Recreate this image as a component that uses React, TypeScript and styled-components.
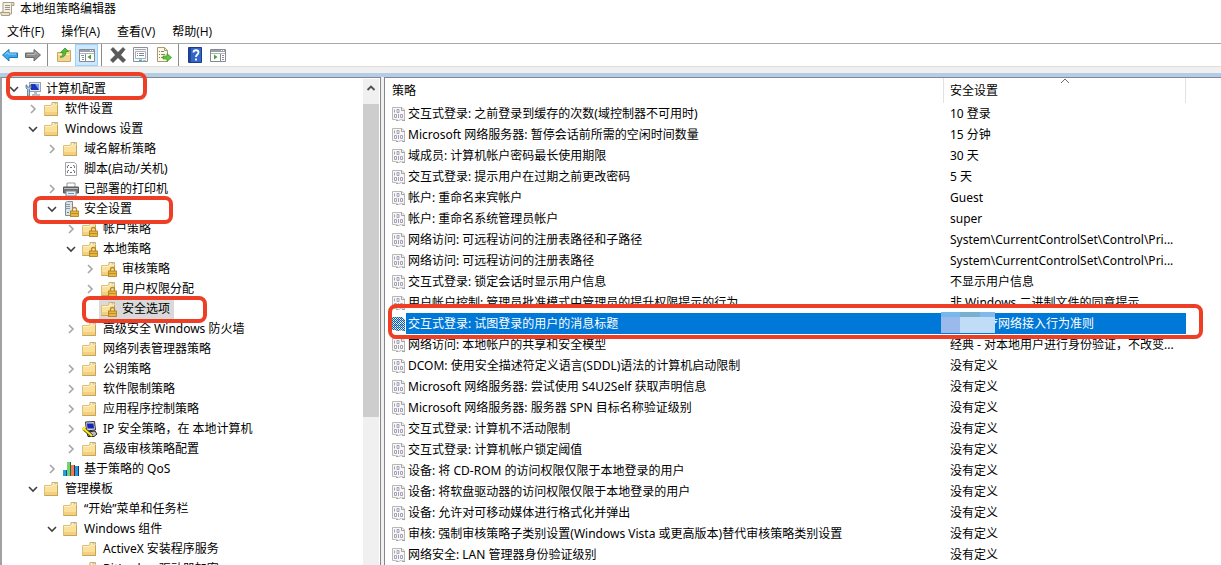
import React from 'react';
import styled, { createGlobalStyle, css } from 'styled-components';

const GlobalStyle = createGlobalStyle`
  *, *::before, *::after { box-sizing: border-box; }
  body {
    margin: 0;
    background: #fff;
    color: #000;
    font: 12px/20px "Noto Sans", "Noto Sans CJK SC", sans-serif;
  }
  button { font: inherit; color: inherit; border: 0; padding: 0; background: none; }
  svg { display: block; flex: none; }
`;

const Window = styled.div`
  display: flex;
  flex-direction: column;
  height: 100vh;
  overflow: hidden;
`;

const TitleBar = styled.header`
  display: flex;
  align-items: center;
  gap: 4px;
  height: 18px;
`;

const Title = styled.h1`
  margin: 0;
  font-size: 12px;
  font-weight: 400;
  line-height: 18px;
`;

const MenuBar = styled.nav`
  display: flex;
  align-items: center;
  gap: 17px;
  height: 26px;
  padding: 2px 7px 0;
  border-bottom: 1px solid #a8a8a8;
  font-family: "Open Sans", "Noto Sans CJK SC", sans-serif;
`;

const MenuItem = styled.button`
  white-space: nowrap;
`;

const ToolBar = styled.div`
  display: flex;
  align-items: center;
  height: 23px;
  margin-left: -2px;
  border-bottom: 1px solid #dcdcdc;
`;

const ToolButton = styled.button<{ $on?: boolean }>`
  display: flex;
  align-items: center;
  justify-content: center;
  width: 23px;
  height: 22px;
  border: 1px solid ${p => (p.$on ? '#99d1ff' : 'transparent')};
  background: ${p => (p.$on ? '#cce8ff' : 'transparent')};
`;

const ToolGroup = styled.div`
  display: flex;
  & + & {
    margin-left: 3px;
    padding-left: 4px;
    border-left: 1px solid #8d8d8d;
  }
`;

const Workspace = styled.main`
  position: relative;
  display: flex;
  flex: 1;
  min-height: 0;
  padding-top: 10px;
  background: linear-gradient(#f0f0f0 6px, #b4cde6 6px, #b4cde6 10px, #f0f0f0 10px);
`;

const TreePane = styled.section`
  display: flex;
  flex: none;
  width: 381px;
  border: solid #828790;
  border-width: 1px 1px 0 2px;
  border-left-color: #a0a2a6;
  background: #fff;
  overflow: hidden;
`;

const Tree = styled.ul`
  flex: 1;
  min-width: 0;
  margin: 0;
  padding: 1px 0 0;
  list-style: none;
`;

const TreeRow = styled.li<{ $depth: number }>`
  display: flex;
  align-items: center;
  gap: 3px;
  height: 20px;
  padding-left: ${p => 6 + p.$depth * 19}px;
  white-space: nowrap;
`;

const Expander = styled.button`
  width: 12px;
  height: 12px;
`;

const TreeNode = styled.span<{ $selected?: boolean }>`
  display: flex;
  align-items: center;
  gap: 5px;
  height: 20px;
  padding: 0 4px 0 2px;
  background: ${p => (p.$selected ? '#d9d9d9' : 'transparent')};
`;

const ScrollBar = styled.div`
  display: flex;
  flex-direction: column;
  width: 16px;
  margin: 1px 1px 0 0;
  background: #f0f0f0;
`;

const ScrollUp = styled.button`
  display: flex;
  justify-content: center;
  height: 25px;
  padding-top: 4px;
`;

const ScrollThumb = styled.div`
  height: 313px;
  background: #cdcdcd;
`;

const ListPane = styled.section`
  position: relative;
  flex: 1;
  min-width: 0;
  margin-left: 3px;
  padding-right: 35px;
  border: solid #828790;
  border-width: 1px 0 0 1px;
  background: #fff;
`;

const Table = styled.table`
  width: 100%;
  table-layout: fixed;
  border-collapse: collapse;
`;

const SettingCol = styled.col`
  width: 243px;
`;

const HeadCell = styled.th<{ $divided?: boolean }>`
  position: relative;
  height: 25px;
  padding: 0 7px;
  font-weight: 400;
  text-align: left;
  ${p => p.$divided && css`
    background: linear-gradient(#e2e2e2, #e2e2e2) left / 1px 100% no-repeat,
      linear-gradient(#e2e2e2, #e2e2e2) right / 1px 100% no-repeat;
  `}
`;

const SortMark = styled.svg`
  position: absolute;
  top: 0;
  left: 50%;
  transform: translateX(-50%);
`;

const Cell = styled.td<{ $selected?: boolean }>`
  position: relative;
  height: 21px;
  padding: 0 0 0 7px;
  white-space: nowrap;
  ${p => p.$selected && css`background: #0078d7; color: #fff;`}
`;

const NameCell = styled.td`
  height: 21px;
  padding: 0 0 0 7px;
  white-space: nowrap;
`;

const PolicyName = styled.div`
  display: flex;
  align-items: center;
`;

const PolicyLabel = styled.span<{ $selected?: boolean }>`
  flex: 1;
  padding-left: 2px;
  line-height: 21px;
  ${p => p.$selected && css`background: #0078d7; color: #fff;`}
`;

const Redacted = styled.span`
  position: absolute;
  top: -1px;
  left: -2px;
  width: 54px;
  height: 21px;
  background:
    linear-gradient(90deg, #78b8ee 19px, #79b0d0 19px, #79b0d0 39px, #80b9ec 39px) top / 100% 5px no-repeat,
    linear-gradient(90deg, #9bb9ea 19px, #c0dcf7 19px);
`;

const AfterRedacted = styled.span`
  padding-left: 36px;
`;

const Callout = styled.div<{ $top: number; $left: number; $width?: number; $right?: number; $height: number }>`
  position: absolute;
  top: ${p => p.$top}px;
  left: ${p => p.$left}px;
  ${p => (p.$width ? `width: ${p.$width}px;` : `right: ${p.$right}px;`)}
  height: ${p => p.$height}px;
  border: 4px solid #ee3f26;
  border-radius: 8px;
  pointer-events: none;
`;

type IconName = 'computer' | 'folder' | 'locked' | 'script' | 'printer' | 'server' | 'ipsec' | 'chart';

const Padlock = () => (
  <g>
    <path d="M9.500 10V8.500a2 2 0 0 1 4 0V10" fill="none" stroke="#b48a2c" strokeWidth="1.300" />
    <rect x="7.500" y="10" width="8" height="5.500" fill="#e8b63d" stroke="#a9791d" strokeWidth=".8" />
    <path d="M8 12.500h7" stroke="#c18d27" />
  </g>
);

const Folder = () => (
  <g>
    <path d="M.5 14.500V4.500h6.500l1.500-2h5v12z" fill="#fbe09a" stroke="#dcc07a" />
    <path d="M8 3.500V1.500h5.500v2" fill="#fdf3d3" stroke="#cfae62" />
    <path d="M10.500 3h2" stroke="#5f9fd0" />
    <path d="M1 5.500h6.500l1.500-1.500h4.500" fill="none" stroke="#fff3c9" />
    <path d="M1 11h12v3H1z" fill="#f3d07e" />
    <path d="M.5 14.500h13.500M13.500 4v10.500" stroke="#c8a55a" />
  </g>
);

function TreeIcon({ name }: { name: IconName }) {
  return (
    <svg width="16" height="16" viewBox="0 0 16 16" aria-hidden="true">
      {name === 'folder' && <Folder />}
      {name === 'locked' && <><Folder /><Padlock /></>}
      {name === 'computer' && (
        <g>
          <rect x="4.500" y="1.500" width="11" height="9" fill="#e5eaf0" stroke="#9aa3ad" />
          <rect x="6" y="3" width="8" height="6" fill="#1734c4" />
          <path d="M10 3h4v6z" fill="#6f9df0" />
          <path d="M9 11h3v2h3v2H7v-2h2z" fill="#b8bec5" />
          <path d="M1 4v3l1.500 1.500V15h2V8.500L6 7V4H5v2H2V4z" fill="#b9ccd9" stroke="#4d7289" strokeWidth=".8" />
        </g>
      )}
      {name === 'script' && (
        <g>
          <path d="M2.500 1.500h9l2 2v11h-11z" fill="#fff" stroke="#a5a5a5" />
          <path d="M6 4.500H5l-1 1.500 1 1M7 6.500h2M10 4.500h1l1 1.500-1 1M6 9.500H5l-1 1.500 1 1M7 11.500h2M10 9.500h1l1 1.500-1 1" fill="none" stroke="#6a737c" />
        </g>
      )}
      {name === 'printer' && (
        <g>
          <path d="M4 6V2h8v4" fill="#fff" stroke="#999" />
          <path d="M.5 6h15v6H.5z" fill="#6c7075" stroke="#55595e" />
          <path d="M1 7.500h14" stroke="#b9bdc2" />
          <path d="M3 10h10v5H3z" fill="#e5eef5" stroke="#888" />
          <path d="M5 12.500h6" stroke="#4f9dca" />
        </g>
      )}
      {name === 'server' && (
        <g>
          <path d="M2.500 1.500l2-1h5v13l-2 1h-5z" fill="#dce2e7" stroke="#7f8a93" />
          <path d="M3 3.500h4M3 5.500h4M3 7.500h4" stroke="#8b98a2" />
          <path d="M4 11.500h2" stroke="#4aa858" />
          <Padlock />
        </g>
      )}
      {name === 'ipsec' && (
        <g>
          <path d="M3.500 1l9-.5 1 8.500-9 1z" fill="#d4d4d4" stroke="#333" />
          <path d="M5 2.500h6.500l.5 5H5.500z" fill="#1522bf" />
          <path d="M5 11l8-1 2 3-3 2.500H6z" fill="#bdbdbd" stroke="#222" />
          <path d="M1 7L10 15" stroke="#333" strokeWidth="3.400" />
          <path d="M1 7L10 15M.5 9l3-3" stroke="#ffec19" strokeWidth="2" />
        </g>
      )}
      {name === 'chart' && (
        <g>
          <path d="M0 9h4v6H0z" fill="#0b4f8c" /><path d="M0 9h3v6H0z" fill="#2b9be6" />
          <path d="M4 1h4v14H4z" fill="#1e6b3a" /><path d="M4 1h3v14H4z" fill="#6fd66f" />
          <path d="M8 4h4v11H8z" fill="#5a2416" /><path d="M8 4h3v11H8z" fill="#f4795a" />
          <path d="M12 5h4v10h-4z" fill="#0b3d6e" /><path d="M12 5h3v10h-3z" fill="#259ae0" />
        </g>
      )}
    </svg>
  );
}

const Chevron = ({ open }: { open: boolean }) => (
  <svg width="12" height="12" viewBox="0 0 12 12" aria-hidden="true">
    {open
      ? <path d="M2 4l4 4 4-4" fill="none" stroke="#404040" strokeWidth="1.600" />
      : <path d="M4 2l4 4-4 4" fill="none" stroke="#a6a6a6" strokeWidth="1.600" />}
  </svg>
);

const PAGE = 'M.5 1.500h9.500l2.500 2.500v10.500l-3-1-3 1-3-1H.5z';

const PolicyIcon = ({ selected }: { selected?: boolean }) => (
  <svg width="14" height="16" viewBox="0 0 14 16" aria-hidden="true">
    <defs>
      <pattern id="dither" width="2" height="2" patternUnits="userSpaceOnUse">
        <path d="M0 0h1v1H0zM1 1h1v1H1z" fill="#0064b4" />
      </pattern>
    </defs>
    <path d={PAGE} fill="#f7f7f7" stroke="#b8b8b8" />
    <path d="M9.500 1.500v3h3M4 14.500h2M10 14.500h3" fill="none" stroke="#a3a3a3" />
    <path d="M2.500 3.500v3M5 3.500h2v3H5zM2.500 8.500h2v3h-2zM6.500 8v4M8.500 8.500h2v3h-2z" fill="none" stroke="#a5a1b4" />
    {selected && <path d={PAGE} fill="url(#dither)" stroke="url(#dither)" />}
  </svg>
);

const ToolIcon = ({ children }: { children: React.ReactNode }) => (
  <svg width="16" height="16" viewBox="0 0 16 16" aria-hidden="true">{children}</svg>
);

const PaneGlyph = ({ right }: { right?: boolean }) => (
  <ToolIcon>
    <path d="M.5 2.500h15v12H.5z" fill="#fff" stroke="#858b91" />
    <path d="M1 3h14v2H1z" fill="#9aa1a8" />
    <path d="M11 3.500h1M13 3.500h1" stroke="#fff" />
    <path d="M1 6.500h14" stroke="#b0b5ba" />
    {right ? (
      <g>
        <path d="M10.500 7v7" stroke="#858b91" />
        <path d="M4 7.500v5l3.500-2.500z" fill="#43a337" />
        <path d="M12 8.500h2M12 10.500h2M12 12.500h2" stroke="#8a9299" />
      </g>
    ) : (
      <g>
        <path d="M6.500 7v7" stroke="#858b91" />
        <path d="M2 8.500h3M3 10.500h2M3 12.500h2" stroke="#8a9299" />
        <path d="M12 7.500v5L8.500 10z" fill="#43a337" />
      </g>
    )}
  </ToolIcon>
);

interface Item { depth: number; icon: IconName; label: string; open?: boolean; selected?: boolean }

const tree: Item[] = [
  { depth: 0, icon: 'computer', label: '计算机配置', open: true },
  { depth: 1, icon: 'folder', label: '软件设置', open: false },
  { depth: 1, icon: 'folder', label: 'Windows 设置', open: true },
  { depth: 2, icon: 'folder', label: '域名解析策略', open: false },
  { depth: 2, icon: 'script', label: '脚本(启动/关机)' },
  { depth: 2, icon: 'printer', label: '已部署的打印机', open: false },
  { depth: 2, icon: 'server', label: '安全设置', open: true },
  { depth: 3, icon: 'locked', label: '帐户策略', open: false },
  { depth: 3, icon: 'locked', label: '本地策略', open: true },
  { depth: 4, icon: 'locked', label: '审核策略', open: false },
  { depth: 4, icon: 'locked', label: '用户权限分配', open: false },
  { depth: 4, icon: 'locked', label: '安全选项', selected: true },
  { depth: 3, icon: 'folder', label: '高级安全 Windows 防火墙', open: false },
  { depth: 3, icon: 'folder', label: '网络列表管理器策略' },
  { depth: 3, icon: 'folder', label: '公钥策略', open: false },
  { depth: 3, icon: 'folder', label: '软件限制策略', open: false },
  { depth: 3, icon: 'folder', label: '应用程序控制策略', open: false },
  { depth: 3, icon: 'ipsec', label: 'IP 安全策略，在 本地计算机', open: false },
  { depth: 3, icon: 'folder', label: '高级审核策略配置', open: false },
  { depth: 2, icon: 'chart', label: '基于策略的 QoS', open: false },
  { depth: 1, icon: 'folder', label: '管理模板', open: true },
  { depth: 2, icon: 'folder', label: '“开始”菜单和任务栏' },
  { depth: 2, icon: 'folder', label: 'Windows 组件', open: true },
  { depth: 3, icon: 'folder', label: 'ActiveX 安装程序服务' },
  { depth: 3, icon: 'folder', label: 'BitLocker 驱动器加密' },
];

const SELECTED = 10;

const policies: [string, string][] = [
  ['交互式登录: 之前登录到缓存的次数(域控制器不可用时)', '10 登录'],
  ['Microsoft 网络服务器: 暂停会话前所需的空闲时间数量', '15 分钟'],
  ['域成员: 计算机帐户密码最长使用期限', '30 天'],
  ['交互式登录: 提示用户在过期之前更改密码', '5 天'],
  ['帐户: 重命名来宾帐户', 'Guest'],
  ['帐户: 重命名系统管理员帐户', 'super'],
  ['网络访问: 可远程访问的注册表路径和子路径', 'System\\CurrentControlSet\\Control\\Pri...'],
  ['网络访问: 可远程访问的注册表路径', 'System\\CurrentControlSet\\Control\\Pri...'],
  ['交互式登录: 锁定会话时显示用户信息', '不显示用户信息'],
  ['用户帐户控制: 管理员批准模式中管理员的提升权限提示的行为', '非 Windows 二进制文件的同意提示'],
  ['交互式登录: 试图登录的用户的消息标题', '疗网络接入行为准则'],
  ['网络访问: 本地帐户的共享和安全模型', '经典 - 对本地用户进行身份验证，不改变...'],
  ['DCOM: 使用安全描述符定义语言(SDDL)语法的计算机启动限制', '没有定义'],
  ['Microsoft 网络服务器: 尝试使用 S4U2Self 获取声明信息', '没有定义'],
  ['Microsoft 网络服务器: 服务器 SPN 目标名称验证级别', '没有定义'],
  ['交互式登录: 计算机不活动限制', '没有定义'],
  ['交互式登录: 计算机帐户锁定阈值', '没有定义'],
  ['设备: 将 CD-ROM 的访问权限仅限于本地登录的用户', '没有定义'],
  ['设备: 将软盘驱动器的访问权限仅限于本地登录的用户', '没有定义'],
  ['设备: 允许对可移动媒体进行格式化并弹出', '没有定义'],
  ['审核: 强制审核策略子类别设置(Windows Vista 或更高版本)替代审核策略类别设置', '没有定义'],
  ['网络安全: LAN 管理器身份验证级别', '没有定义'],
];

export default function App() {
  return (
    <Window lang="zh-CN">
      <GlobalStyle />
      <TitleBar>
        <ToolIcon>
          <path d="M3 1.500h9.500l-1 1v10.500H1.500V11H3z" fill="#f6f0dc" stroke="#a99f86" />
          <path d="M11.500 4.500h2.500v-3h-2" fill="#e6dcbc" stroke="#a99f86" />
          <path d="M.5 11.500h9v3h-8z" fill="#e9e0c4" stroke="#a99f86" />
          <path d="M5 4.500h5M5 6.500h5M5 8.500h5" stroke="#8e949b" />
        </ToolIcon>
        <Title>本地组策略编辑器</Title>
      </TitleBar>
      <MenuBar>
        <MenuItem>文件(F)</MenuItem>
        <MenuItem>操作(A)</MenuItem>
        <MenuItem>查看(V)</MenuItem>
        <MenuItem>帮助(H)</MenuItem>
      </MenuBar>
      <ToolBar>
        <ToolGroup>
          <ToolButton aria-label="后退">
            <ToolIcon><path d="M.5 8L7 2.500V6h8.500v4.500H7V14z" fill="#3ba9ec" stroke="#1877b8" /><path d="M3 7.500L6 5v2h8" fill="none" stroke="#91d5ff" /></ToolIcon>
          </ToolButton>
          <ToolButton aria-label="前进">
            <ToolIcon><path d="M15.500 8L9 2.500V6H.5v4.500H9V14z" fill="#8d8d8d" stroke="#6a6a6a" /><path d="M2 7.500h8V5l3 2.500" fill="none" stroke="#b9b9b9" /></ToolIcon>
          </ToolButton>
        </ToolGroup>
        <ToolGroup>
          <ToolButton aria-label="上一级">
            <ToolIcon>
              <path d="M1.500 14.500v-9h6l1-2h6v11z" fill="#f3d591" stroke="#c9a85f" />
              <path d="M2 7.500h12" stroke="#fff0bd" />
              <path d="M4 10c2-.5 3-2 3-4.500H4.500L9 1l3.500 3.500H10c0 4-2.500 6.500-6 5.500z" fill="#55bd3a" stroke="#2e8a22" strokeWidth=".7" />
            </ToolIcon>
          </ToolButton>
          <ToolButton $on aria-label="显示/隐藏控制台树"><PaneGlyph /></ToolButton>
        </ToolGroup>
        <ToolGroup>
          <ToolButton aria-label="删除">
            <ToolIcon><path d="M1 2.500L3 .5l5 5 5-5 2 2L10.500 8l5 5-2.500 2.500-5-5-5 5L.5 13l5-5z" fill="#5a5a5a" stroke="#434343" strokeWidth=".7" /></ToolIcon>
          </ToolButton>
          <ToolButton aria-label="属性">
            <ToolIcon>
              <path d="M.5.5h14v14H.5z" fill="#f7f8f9" stroke="#8b9197" />
              <path d="M2 2.500h11" stroke="#a0a6ac" />
              <path d="M2.500 4.500h10v7h-10z" fill="#fff" stroke="#a9afb5" />
              <path d="M4 6.500h1M6 6.500h5M4 8.500h1M6 8.500h5" stroke="#7d858c" />
              <path d="M6 13.500h3" stroke="#38b4ea" strokeWidth="2" />
              <path d="M10 13.500h3" stroke="#b8bec3" />
            </ToolIcon>
          </ToolButton>
          <ToolButton aria-label="导出列表">
            <ToolIcon>
              <path d="M1.500.5h7l3 3v11h-10z" fill="#fdf9e6" stroke="#a79a6e" />
              <path d="M8.500.5v3h3" fill="none" stroke="#a79a6e" />
              <path d="M3 4.500h1M5 4.500h3M3 7.500h1M5 7.500h4M3 10.500h1M5 10.500h2" stroke="#8a8463" />
              <path d="M7 9h4V6.500l4.500 4-4.500 4V12H7z" fill="#63c840" stroke="#358f24" strokeWidth=".7" />
            </ToolIcon>
          </ToolButton>
        </ToolGroup>
        <ToolGroup>
          <ToolButton aria-label="帮助">
            <ToolIcon>
              <path d="M1.500.5h13v15h-13z" fill="#3465c8" stroke="#1a3c8f" />
              <path d="M2 1h2v14H2z" fill="#204696" />
              <path d="M6.500 5.500c0-3 5-3 5 0 0 2-2.500 2-2.500 4.500M9 11.500v2" fill="none" stroke="#fff" strokeWidth="1.800" />
            </ToolIcon>
          </ToolButton>
          <ToolButton aria-label="显示/隐藏操作窗格"><PaneGlyph right /></ToolButton>
        </ToolGroup>
      </ToolBar>
      <Workspace>
        <TreePane>
          <Tree role="tree" aria-label="控制台树">
            {tree.map(item => (
              <TreeRow key={item.label} role="treeitem" aria-level={item.depth + 1} aria-expanded={item.open} aria-selected={!!item.selected} $depth={item.depth}>
                {item.open === undefined
                  ? <Expander as="span" />
                  : <Expander aria-label={item.open ? '折叠' : '展开'}><Chevron open={item.open} /></Expander>}
                <TreeNode $selected={item.selected}>
                  <TreeIcon name={item.icon} />
                  <span>{item.label}</span>
                </TreeNode>
              </TreeRow>
            ))}
          </Tree>
          <ScrollBar>
            <ScrollUp aria-label="向上滚动">
              <svg width="10" height="10" viewBox="0 0 10 10"><path d="M1.500 7L5 3.500 8.500 7" fill="none" stroke="#505050" strokeWidth="1.800" /></svg>
            </ScrollUp>
            <ScrollThumb />
          </ScrollBar>
        </TreePane>
        <ListPane>
          <Table>
            <colgroup><col /><SettingCol /></colgroup>
            <thead>
              <tr>
                <HeadCell scope="col">策略</HeadCell>
                <HeadCell scope="col" $divided>
                  安全设置
                  <SortMark width="9" height="6" viewBox="0 0 9 6"><path d="M.5 5l4-4 4 4" fill="none" stroke="#6b6b6b" /></SortMark>
                </HeadCell>
              </tr>
            </thead>
            <tbody>
              {policies.map(([name, setting], i) => (
                <tr key={name}>
                  <NameCell>
                    <PolicyName>
                      <PolicyIcon selected={i === SELECTED} />
                      <PolicyLabel $selected={i === SELECTED}>{name}</PolicyLabel>
                    </PolicyName>
                  </NameCell>
                  <Cell $selected={i === SELECTED}>
                    {i === SELECTED ? <><AfterRedacted>{setting}</AfterRedacted><Redacted /></> : setting}
                  </Cell>
                </tr>
              ))}
            </tbody>
          </Table>
        </ListPane>
        <Callout $top={5} $left={6} $width={141} $height={28} />
        <Callout $top={129} $left={33} $width={140} $height={28} />
        <Callout $top={229} $left={82} $width={125} $height={27} />
        <Callout $top={237} $left={388} $right={18} $height={35} />
      </Workspace>
    </Window>
  );
}
